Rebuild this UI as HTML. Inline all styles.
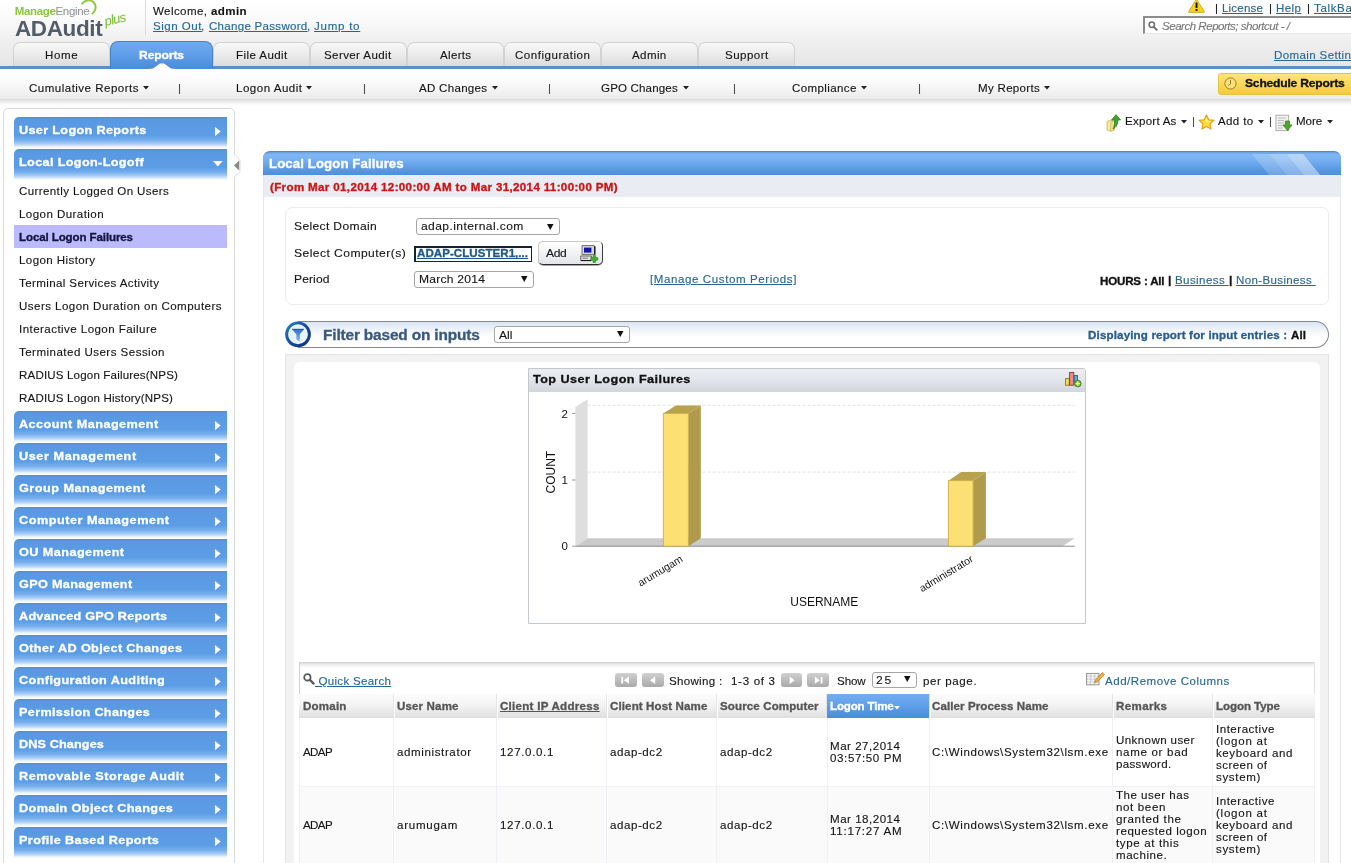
<!DOCTYPE html>
<html><head><meta charset="utf-8"><title>ADAudit Plus - Local Logon Failures</title>
<style>
html,body{margin:0;padding:0;}
body{width:1351px;height:863px;overflow:hidden;position:relative;background:#fff;font-family:"Liberation Sans", sans-serif;}
#pg{will-change:transform;position:absolute;left:0;top:0;width:1351px;height:863px;overflow:hidden;}
#pg div,#pg span.t,#pg svg{position:absolute;box-sizing:border-box;}
span.t{white-space:pre;}
.u{text-decoration:underline;}
.lk{color:#26678f;text-decoration:underline;}
.sh{border-radius:5px 0 0 0;background:linear-gradient(#4d8edb 0%,#5898e2 7%,#5c9ee6 60%,#75adec 74%,#a9cdf5 87%,#e9f3fd 96%,#ffffff 100%);}
.tab{border:1px solid #d2d2d2;border-bottom:none;border-radius:7px 7px 0 0;background:linear-gradient(#f8f8f8,#ececec 45%,#dadada);}
.sel{border:1px solid #a6a6a6;border-radius:3px;background:#fff;}
.pb{border-radius:3px;background:linear-gradient(#d0d0d0,#a9a9a9);}
.th{background:linear-gradient(#fdfdfd,#f1f1f1 50%,#dedede);border-left:1px solid #fff;}
</style></head><body><div id="pg">
<div style="left:0px;top:0px;width:1351px;height:67px;background:linear-gradient(#ffffff 0%,#fbfbfb 25%,#f0f0f0 60%,#e5e5e5 100%);"></div>
<span class="t" style="left:14.80px;top:5.77px;font-size:11.5px;line-height:11.5px;color:#141414;letter-spacing:-0.351px;"><b style="color:#8cc63f">Manage</b><span style="color:#8b929a">Engine</span></span>
<svg style="left:78px;top:0px" width="22" height="18" viewBox="0 0 22 18"><path d="M3.5 4.2 C8 -1.5 15.5 -0.5 17.3 5 C18.2 8.5 16.5 12 13.8 14" fill="none" stroke="#8cc63f" stroke-width="1.9"/><path d="M7 2.6 C10.5 -0.6 14.8 0.8 15.8 4.6" fill="none" stroke="#a9d46c" stroke-width="0.8"/></svg>
<span class="t" style="left:15.00px;top:17.55px;font-size:22.5px;line-height:22.5px;color:#525d67;font-weight:700;letter-spacing:-0.382px;">ADAudit</span>
<span class="t" style="left:105.90px;top:15.10px;font-size:13px;line-height:13px;color:#7fbf3f;font-style:italic;-webkit-text-stroke:0.12px;transform:rotate(-13deg);transform-origin:0 100%;letter-spacing:-0.7px;">plus</span>
<div style="left:145px;top:0px;width:1px;height:35px;background:#dcdcdc;"></div>
<span class="t" style="left:153.10px;top:5.59px;font-size:11px;line-height:11px;color:#141414;letter-spacing:0.382px;transform:scaleX(1.05);transform-origin:0 0;-webkit-text-stroke:0.12px;">Welcome, <b>admin</b></span>
<span class="t" style="left:152.50px;top:21.19px;font-size:11px;line-height:11px;color:#26678f;letter-spacing:0.476px;transform:scaleX(1.05);transform-origin:0 0;-webkit-text-stroke:0.12px;"><span class="lk">Sign Out</span></span>
<span class="t" style="left:200.70px;top:21.19px;font-size:11px;line-height:11px;color:#26678f;transform:scaleX(1.05);transform-origin:0 0;-webkit-text-stroke:0.12px;">,</span>
<span class="t" style="left:208.60px;top:21.19px;font-size:11px;line-height:11px;color:#26678f;letter-spacing:0.264px;transform:scaleX(1.05);transform-origin:0 0;-webkit-text-stroke:0.12px;"><span class="lk">Change Password</span></span>
<span class="t" style="left:306.60px;top:21.19px;font-size:11px;line-height:11px;color:#26678f;transform:scaleX(1.05);transform-origin:0 0;-webkit-text-stroke:0.12px;">,</span>
<span class="t" style="left:314.40px;top:21.19px;font-size:11px;line-height:11px;color:#26678f;letter-spacing:0.704px;transform:scaleX(1.05);transform-origin:0 0;-webkit-text-stroke:0.12px;"><span class="lk">Jump to</span></span>
<svg style="left:1188px;top:-1px" width="17" height="14" viewBox="0 0 17 14"><path d="M8.5 0.2 L16.4 12.6 Q16.6 13.4 15.8 13.4 L1.2 13.4 Q0.4 13.4 0.6 12.6 Z" fill="#f6d21c" stroke="#b89a10" stroke-width="0.7"/><rect x="7.6" y="3.6" width="1.9" height="5.4" fill="#111"/><rect x="7.6" y="10" width="1.9" height="1.9" fill="#111"/></svg>
<span class="t" style="left:1214.60px;top:3.49px;font-size:11px;line-height:11px;color:#141414;transform:scaleX(1.05);transform-origin:0 0;-webkit-text-stroke:0.12px;">|</span>
<span class="t" style="left:1221.80px;top:3.49px;font-size:11px;line-height:11px;color:#26678f;letter-spacing:0.173px;transform:scaleX(1.05);transform-origin:0 0;-webkit-text-stroke:0.12px;"><span class="lk">License</span></span>
<span class="t" style="left:1268.60px;top:3.49px;font-size:11px;line-height:11px;color:#141414;transform:scaleX(1.05);transform-origin:0 0;-webkit-text-stroke:0.12px;">|</span>
<span class="t" style="left:1275.80px;top:3.49px;font-size:11px;line-height:11px;color:#26678f;letter-spacing:0.366px;transform:scaleX(1.05);transform-origin:0 0;-webkit-text-stroke:0.12px;"><span class="lk">Help</span></span>
<span class="t" style="left:1306.70px;top:3.49px;font-size:11px;line-height:11px;color:#141414;transform:scaleX(1.05);transform-origin:0 0;-webkit-text-stroke:0.12px;">|</span>
<span class="t" style="left:1313.80px;top:3.49px;font-size:11px;line-height:11px;color:#26678f;letter-spacing:0.605px;transform:scaleX(1.05);transform-origin:0 0;-webkit-text-stroke:0.12px;"><span class="lk">TalkBack</span></span>
<div style="left:1143px;top:16px;width:215px;height:18px;background:#fff;border-top:2px solid #8c8c8c;border-left:2px solid #8c8c8c;border-bottom:1px solid #e6e6e6;"></div>
<svg style="left:1148px;top:21px" width="10" height="10" viewBox="0 0 10 10"><circle cx="3.8" cy="3.8" r="2.7" fill="none" stroke="#6e6e6e" stroke-width="1.5"/><path d="M5.8 5.8 L8.8 8.8" stroke="#6e6e6e" stroke-width="1.9" stroke-linecap="round"/></svg>
<span class="t" style="left:1162.10px;top:20.69px;font-size:11px;line-height:11px;color:#777;font-style:italic;letter-spacing:-0.468px;transform:scaleX(1.05);transform-origin:0 0;-webkit-text-stroke:0.12px;">Search Reports; shortcut - /</span>
<span class="t" style="left:1273.70px;top:50.49px;font-size:11px;line-height:11px;color:#26678f;letter-spacing:0.351px;transform:scaleX(1.05);transform-origin:0 0;-webkit-text-stroke:0.12px;"><span class="lk">Domain Settings</span></span>
<div class="tab" style="left:13px;top:42px;width:97px;height:25px;"></div>
<span class="t" style="left:44.80px;top:50.39px;font-size:11px;line-height:11px;color:#141414;letter-spacing:0.568px;transform:scaleX(1.05);transform-origin:0 0;-webkit-text-stroke:0.12px;">Home</span>
<div class="tab" style="left:213px;top:42px;width:97px;height:25px;"></div>
<span class="t" style="left:235.80px;top:50.39px;font-size:11px;line-height:11px;color:#141414;letter-spacing:0.400px;transform:scaleX(1.05);transform-origin:0 0;-webkit-text-stroke:0.12px;">File Audit</span>
<div class="tab" style="left:310px;top:42px;width:97px;height:25px;"></div>
<span class="t" style="left:324.40px;top:50.39px;font-size:11px;line-height:11px;color:#141414;letter-spacing:0.371px;transform:scaleX(1.05);transform-origin:0 0;-webkit-text-stroke:0.12px;">Server Audit</span>
<div class="tab" style="left:407px;top:42px;width:97px;height:25px;"></div>
<span class="t" style="left:439.70px;top:50.39px;font-size:11px;line-height:11px;color:#141414;letter-spacing:0.306px;transform:scaleX(1.05);transform-origin:0 0;-webkit-text-stroke:0.12px;">Alerts</span>
<div class="tab" style="left:504px;top:42px;width:97px;height:25px;"></div>
<span class="t" style="left:514.90px;top:50.39px;font-size:11px;line-height:11px;color:#141414;letter-spacing:0.495px;transform:scaleX(1.05);transform-origin:0 0;-webkit-text-stroke:0.12px;">Configuration</span>
<div class="tab" style="left:601px;top:42px;width:97px;height:25px;"></div>
<span class="t" style="left:631.80px;top:50.39px;font-size:11px;line-height:11px;color:#141414;letter-spacing:0.371px;transform:scaleX(1.05);transform-origin:0 0;-webkit-text-stroke:0.12px;">Admin</span>
<div class="tab" style="left:698px;top:42px;width:97px;height:25px;"></div>
<span class="t" style="left:724.70px;top:50.39px;font-size:11px;line-height:11px;color:#141414;letter-spacing:0.446px;transform:scaleX(1.05);transform-origin:0 0;-webkit-text-stroke:0.12px;">Support</span>
<div style="left:0px;top:66px;width:1351px;height:3px;background:#5b8fc6;"></div>
<div style="left:110px;top:41px;width:103px;height:28px;border:1px solid #4a82c6;border-bottom:none;border-radius:8px 8px 0 0;background:linear-gradient(#70aaee 0%,#62a0ea 40%,#4a8ad8 100%);"></div>
<span class="t" style="left:139.10px;top:50.39px;font-size:11px;line-height:11px;color:#fff;font-weight:700;letter-spacing:-0.101px;transform:scaleX(1.1);transform-origin:0 0;-webkit-text-stroke:0.3px;">Reports</span>
<svg style="left:148px;top:63px" width="28" height="6" viewBox="0 0 28 6"><path d="M0 6 L5 5.4 L12 0.4 L16 0.4 L23 5.4 L28 6 Z" fill="#fff"/></svg>
<div style="left:0px;top:69px;width:1351px;height:30px;background:linear-gradient(#ffffff 0%,#fcfcfc 40%,#ebebeb 100%);"></div>
<div style="left:0px;top:99px;width:1351px;height:6px;background:linear-gradient(#d9d9d9 0%,#e6e6e6 30%,#f3f3f3 65%,#ffffff 100%);"></div>
<span class="t" style="left:29.00px;top:82.59px;font-size:11px;line-height:11px;color:#141414;letter-spacing:0.450px;transform:scaleX(1.05);transform-origin:0 0;-webkit-text-stroke:0.12px;">Cumulative Reports</span>
<svg style="left:143.4px;top:86.0px" width="8" height="5" viewBox="0 0 8 5"><path d="M0 0 H6 L3.0 3.5 Z" fill="#222"/></svg>
<span class="t" style="left:236.00px;top:82.59px;font-size:11px;line-height:11px;color:#141414;letter-spacing:0.478px;transform:scaleX(1.05);transform-origin:0 0;-webkit-text-stroke:0.12px;">Logon Audit</span>
<svg style="left:305.8px;top:86.0px" width="8" height="5" viewBox="0 0 8 5"><path d="M0 0 H6 L3.0 3.5 Z" fill="#222"/></svg>
<span class="t" style="left:419.40px;top:82.59px;font-size:11px;line-height:11px;color:#141414;letter-spacing:0.271px;transform:scaleX(1.05);transform-origin:0 0;-webkit-text-stroke:0.12px;">AD Changes</span>
<svg style="left:492.0px;top:86.0px" width="8" height="5" viewBox="0 0 8 5"><path d="M0 0 H6 L3.0 3.5 Z" fill="#222"/></svg>
<span class="t" style="left:600.70px;top:82.59px;font-size:11px;line-height:11px;color:#141414;letter-spacing:0.152px;transform:scaleX(1.05);transform-origin:0 0;-webkit-text-stroke:0.12px;">GPO Changes</span>
<svg style="left:683.0px;top:86.0px" width="8" height="5" viewBox="0 0 8 5"><path d="M0 0 H6 L3.0 3.5 Z" fill="#222"/></svg>
<span class="t" style="left:792.10px;top:82.59px;font-size:11px;line-height:11px;color:#141414;letter-spacing:0.351px;transform:scaleX(1.05);transform-origin:0 0;-webkit-text-stroke:0.12px;">Compliance</span>
<svg style="left:861.0px;top:86.0px" width="8" height="5" viewBox="0 0 8 5"><path d="M0 0 H6 L3.0 3.5 Z" fill="#222"/></svg>
<span class="t" style="left:978.10px;top:82.59px;font-size:11px;line-height:11px;color:#141414;letter-spacing:0.284px;transform:scaleX(1.05);transform-origin:0 0;-webkit-text-stroke:0.12px;">My Reports</span>
<svg style="left:1044.0px;top:86.0px" width="8" height="5" viewBox="0 0 8 5"><path d="M0 0 H6 L3.0 3.5 Z" fill="#222"/></svg>
<span class="t" style="left:177.80px;top:82.59px;font-size:11px;line-height:11px;color:#444;transform:scaleX(1.05);transform-origin:0 0;-webkit-text-stroke:0.12px;">|</span>
<span class="t" style="left:362.80px;top:82.59px;font-size:11px;line-height:11px;color:#444;transform:scaleX(1.05);transform-origin:0 0;-webkit-text-stroke:0.12px;">|</span>
<span class="t" style="left:547.80px;top:82.59px;font-size:11px;line-height:11px;color:#444;transform:scaleX(1.05);transform-origin:0 0;-webkit-text-stroke:0.12px;">|</span>
<span class="t" style="left:732.80px;top:82.59px;font-size:11px;line-height:11px;color:#444;transform:scaleX(1.05);transform-origin:0 0;-webkit-text-stroke:0.12px;">|</span>
<span class="t" style="left:917.80px;top:82.59px;font-size:11px;line-height:11px;color:#444;transform:scaleX(1.05);transform-origin:0 0;-webkit-text-stroke:0.12px;">|</span>
<div style="left:1217.5px;top:72.5px;width:150px;height:22.5px;border:1px solid #e9c046;border-radius:3px;background:linear-gradient(#fde680 0%,#fbd858 50%,#f7c93a 100%);"></div>
<svg style="left:1224px;top:77px" width="13" height="13" viewBox="0 0 13 13"><circle cx="6.5" cy="6.5" r="5.6" fill="#fbe07a" stroke="#8a7420" stroke-width="0.9"/><path d="M6.5 3 L6.5 6.8 L4.4 8.6" fill="none" stroke="#8a7420" stroke-width="0.9"/></svg>
<span class="t" style="left:1245.40px;top:78.39px;font-size:11px;line-height:11px;color:#111;font-weight:700;letter-spacing:-0.187px;transform:scaleX(1.1);transform-origin:0 0;-webkit-text-stroke:0.3px;">Schedule Reports</span>
<div style="left:3px;top:108px;width:232px;height:770px;border:1px solid #d9d9d9;border-radius:5px;background:#fff;"></div>
<svg style="left:233px;top:153px" width="8" height="24" viewBox="0 0 8 24"><path d="M1.5 1 L7 6.8 L7 18.4 L1.5 24" fill="#fff" stroke="#dcdcdc" stroke-width="1"/><path d="M1 1.5 V23.5" stroke="#fff" stroke-width="1.6"/><path d="M6.2 7.6 L6.2 17.6 L1 12.6 Z" fill="#8a8a8a"/></svg>
<div class="sh" style="left:14px;top:117px;width:213px;height:31px;"></div>
<span class="t" style="left:18.90px;top:125.27px;font-size:11.5px;line-height:11.5px;color:#fff;font-weight:700;letter-spacing:0.301px;transform:scaleX(1.1);transform-origin:0 0;-webkit-text-stroke:0.3px;">User Logon Reports</span>
<svg style="left:214.8px;top:127.2px" width="7" height="11" viewBox="0 0 7 11"><path d="M0 0 L5.6 4.6 L0 9.2 Z" fill="#fff"/></svg>
<div class="sh" style="left:14px;top:149px;width:213px;height:31px;"></div>
<span class="t" style="left:18.90px;top:157.27px;font-size:11.5px;line-height:11.5px;color:#fff;font-weight:700;letter-spacing:0.320px;transform:scaleX(1.1);transform-origin:0 0;-webkit-text-stroke:0.3px;">Local Logon-Logoff</span>
<svg style="left:212.6px;top:160.9px" width="11" height="7" viewBox="0 0 11 7"><path d="M0 0 H9.6 L4.8 5.6 Z" fill="#fff"/></svg>
<span class="t" style="left:18.90px;top:185.89px;font-size:11px;line-height:11px;color:#141414;letter-spacing:0.365px;transform:scaleX(1.05);transform-origin:0 0;-webkit-text-stroke:0.12px;">Currently Logged On Users</span>
<span class="t" style="left:18.90px;top:208.89px;font-size:11px;line-height:11px;color:#141414;letter-spacing:0.409px;transform:scaleX(1.05);transform-origin:0 0;-webkit-text-stroke:0.12px;">Logon Duration</span>
<div style="left:14px;top:225px;width:213px;height:23px;background:#babafc;"></div>
<span class="t" style="left:18.90px;top:232.31px;font-size:10.5px;line-height:10.5px;color:#14143c;font-weight:700;letter-spacing:-0.101px;transform:scaleX(1.1);transform-origin:0 0;-webkit-text-stroke:0.3px;">Local Logon Failures</span>
<span class="t" style="left:18.90px;top:254.89px;font-size:11px;line-height:11px;color:#141414;letter-spacing:0.383px;transform:scaleX(1.05);transform-origin:0 0;-webkit-text-stroke:0.12px;">Logon History</span>
<span class="t" style="left:18.90px;top:277.89px;font-size:11px;line-height:11px;color:#141414;letter-spacing:0.366px;transform:scaleX(1.05);transform-origin:0 0;-webkit-text-stroke:0.12px;">Terminal Services Activity</span>
<span class="t" style="left:18.90px;top:300.89px;font-size:11px;line-height:11px;color:#141414;letter-spacing:0.430px;transform:scaleX(1.05);transform-origin:0 0;-webkit-text-stroke:0.12px;">Users Logon Duration on Computers</span>
<span class="t" style="left:18.90px;top:323.89px;font-size:11px;line-height:11px;color:#141414;letter-spacing:0.419px;transform:scaleX(1.05);transform-origin:0 0;-webkit-text-stroke:0.12px;">Interactive Logon Failure</span>
<span class="t" style="left:18.90px;top:346.89px;font-size:11px;line-height:11px;color:#141414;letter-spacing:0.441px;transform:scaleX(1.05);transform-origin:0 0;-webkit-text-stroke:0.12px;">Terminated Users Session</span>
<span class="t" style="left:18.90px;top:369.89px;font-size:11px;line-height:11px;color:#141414;letter-spacing:0.160px;transform:scaleX(1.05);transform-origin:0 0;-webkit-text-stroke:0.12px;">RADIUS Logon Failures(NPS)</span>
<span class="t" style="left:18.90px;top:392.89px;font-size:11px;line-height:11px;color:#141414;letter-spacing:0.173px;transform:scaleX(1.05);transform-origin:0 0;-webkit-text-stroke:0.12px;">RADIUS Logon History(NPS)</span>
<div class="sh" style="left:14px;top:411px;width:213px;height:31px;"></div>
<span class="t" style="left:18.90px;top:419.27px;font-size:11.5px;line-height:11.5px;color:#fff;font-weight:700;letter-spacing:0.413px;transform:scaleX(1.1);transform-origin:0 0;-webkit-text-stroke:0.3px;">Account Management</span>
<svg style="left:214.8px;top:421.2px" width="7" height="11" viewBox="0 0 7 11"><path d="M0 0 L5.6 4.6 L0 9.2 Z" fill="#fff"/></svg>
<div class="sh" style="left:14px;top:443px;width:213px;height:31px;"></div>
<span class="t" style="left:18.90px;top:451.27px;font-size:11.5px;line-height:11.5px;color:#fff;font-weight:700;letter-spacing:0.529px;transform:scaleX(1.1);transform-origin:0 0;-webkit-text-stroke:0.3px;">User Management</span>
<svg style="left:214.8px;top:453.2px" width="7" height="11" viewBox="0 0 7 11"><path d="M0 0 L5.6 4.6 L0 9.2 Z" fill="#fff"/></svg>
<div class="sh" style="left:14px;top:475px;width:213px;height:31px;"></div>
<span class="t" style="left:18.90px;top:483.27px;font-size:11.5px;line-height:11.5px;color:#fff;font-weight:700;letter-spacing:0.447px;transform:scaleX(1.1);transform-origin:0 0;-webkit-text-stroke:0.3px;">Group Management</span>
<svg style="left:214.8px;top:485.2px" width="7" height="11" viewBox="0 0 7 11"><path d="M0 0 L5.6 4.6 L0 9.2 Z" fill="#fff"/></svg>
<div class="sh" style="left:14px;top:507px;width:213px;height:31px;"></div>
<span class="t" style="left:18.90px;top:515.27px;font-size:11.5px;line-height:11.5px;color:#fff;font-weight:700;letter-spacing:0.473px;transform:scaleX(1.1);transform-origin:0 0;-webkit-text-stroke:0.3px;">Computer Management</span>
<svg style="left:214.8px;top:517.2px" width="7" height="11" viewBox="0 0 7 11"><path d="M0 0 L5.6 4.6 L0 9.2 Z" fill="#fff"/></svg>
<div class="sh" style="left:14px;top:539px;width:213px;height:31px;"></div>
<span class="t" style="left:18.90px;top:547.27px;font-size:11.5px;line-height:11.5px;color:#fff;font-weight:700;letter-spacing:0.398px;transform:scaleX(1.1);transform-origin:0 0;-webkit-text-stroke:0.3px;">OU Management</span>
<svg style="left:214.8px;top:549.2px" width="7" height="11" viewBox="0 0 7 11"><path d="M0 0 L5.6 4.6 L0 9.2 Z" fill="#fff"/></svg>
<div class="sh" style="left:14px;top:571px;width:213px;height:31px;"></div>
<span class="t" style="left:18.90px;top:579.27px;font-size:11.5px;line-height:11.5px;color:#fff;font-weight:700;letter-spacing:0.292px;transform:scaleX(1.1);transform-origin:0 0;-webkit-text-stroke:0.3px;">GPO Management</span>
<svg style="left:214.8px;top:581.2px" width="7" height="11" viewBox="0 0 7 11"><path d="M0 0 L5.6 4.6 L0 9.2 Z" fill="#fff"/></svg>
<div class="sh" style="left:14px;top:603px;width:213px;height:31px;"></div>
<span class="t" style="left:18.90px;top:611.27px;font-size:11.5px;line-height:11.5px;color:#fff;font-weight:700;letter-spacing:0.223px;transform:scaleX(1.1);transform-origin:0 0;-webkit-text-stroke:0.3px;">Advanced GPO Reports</span>
<svg style="left:214.8px;top:613.2px" width="7" height="11" viewBox="0 0 7 11"><path d="M0 0 L5.6 4.6 L0 9.2 Z" fill="#fff"/></svg>
<div class="sh" style="left:14px;top:635px;width:213px;height:31px;"></div>
<span class="t" style="left:18.90px;top:643.27px;font-size:11.5px;line-height:11.5px;color:#fff;font-weight:700;letter-spacing:0.336px;transform:scaleX(1.1);transform-origin:0 0;-webkit-text-stroke:0.3px;">Other AD Object Changes</span>
<svg style="left:214.8px;top:645.2px" width="7" height="11" viewBox="0 0 7 11"><path d="M0 0 L5.6 4.6 L0 9.2 Z" fill="#fff"/></svg>
<div class="sh" style="left:14px;top:667px;width:213px;height:31px;"></div>
<span class="t" style="left:18.90px;top:675.27px;font-size:11.5px;line-height:11.5px;color:#fff;font-weight:700;letter-spacing:0.370px;transform:scaleX(1.1);transform-origin:0 0;-webkit-text-stroke:0.3px;">Configuration Auditing</span>
<svg style="left:214.8px;top:677.2px" width="7" height="11" viewBox="0 0 7 11"><path d="M0 0 L5.6 4.6 L0 9.2 Z" fill="#fff"/></svg>
<div class="sh" style="left:14px;top:699px;width:213px;height:31px;"></div>
<span class="t" style="left:18.90px;top:707.27px;font-size:11.5px;line-height:11.5px;color:#fff;font-weight:700;letter-spacing:0.304px;transform:scaleX(1.1);transform-origin:0 0;-webkit-text-stroke:0.3px;">Permission Changes</span>
<svg style="left:214.8px;top:709.2px" width="7" height="11" viewBox="0 0 7 11"><path d="M0 0 L5.6 4.6 L0 9.2 Z" fill="#fff"/></svg>
<div class="sh" style="left:14px;top:731px;width:213px;height:31px;"></div>
<span class="t" style="left:18.90px;top:739.27px;font-size:11.5px;line-height:11.5px;color:#fff;font-weight:700;letter-spacing:0.108px;transform:scaleX(1.1);transform-origin:0 0;-webkit-text-stroke:0.3px;">DNS Changes</span>
<svg style="left:214.8px;top:741.2px" width="7" height="11" viewBox="0 0 7 11"><path d="M0 0 L5.6 4.6 L0 9.2 Z" fill="#fff"/></svg>
<div class="sh" style="left:14px;top:763px;width:213px;height:31px;"></div>
<span class="t" style="left:18.90px;top:771.27px;font-size:11.5px;line-height:11.5px;color:#fff;font-weight:700;letter-spacing:0.477px;transform:scaleX(1.1);transform-origin:0 0;-webkit-text-stroke:0.3px;">Removable Storage Audit</span>
<svg style="left:214.8px;top:773.2px" width="7" height="11" viewBox="0 0 7 11"><path d="M0 0 L5.6 4.6 L0 9.2 Z" fill="#fff"/></svg>
<div class="sh" style="left:14px;top:795px;width:213px;height:31px;"></div>
<span class="t" style="left:18.90px;top:803.27px;font-size:11.5px;line-height:11.5px;color:#fff;font-weight:700;letter-spacing:0.350px;transform:scaleX(1.1);transform-origin:0 0;-webkit-text-stroke:0.3px;">Domain Object Changes</span>
<svg style="left:214.8px;top:805.2px" width="7" height="11" viewBox="0 0 7 11"><path d="M0 0 L5.6 4.6 L0 9.2 Z" fill="#fff"/></svg>
<div class="sh" style="left:14px;top:827px;width:213px;height:31px;"></div>
<span class="t" style="left:18.90px;top:835.27px;font-size:11.5px;line-height:11.5px;color:#fff;font-weight:700;letter-spacing:0.352px;transform:scaleX(1.1);transform-origin:0 0;-webkit-text-stroke:0.3px;">Profile Based Reports</span>
<svg style="left:214.8px;top:837.2px" width="7" height="11" viewBox="0 0 7 11"><path d="M0 0 L5.6 4.6 L0 9.2 Z" fill="#fff"/></svg>
<svg style="left:1106px;top:114px" width="16" height="18" viewBox="0 0 16 18">
<path d="M1 7.5 L5 6 L8.5 7.2 L8.5 16 L4.5 17.2 L1 16 Z" fill="#f4eba8" stroke="#c9b45a" stroke-width="0.8"/>
<path d="M4.6 7.8 L8.5 7.2 L8.5 16 L4.6 17.2 Z" fill="#efe08a" stroke="#c9b45a" stroke-width="0.6"/>
<path d="M10 0.6 L14.6 6 L12 6 C12 10 10.5 13 7 15 C8.6 12 8.8 9 8.6 6 L5.6 6 Z" fill="#3fa32c" stroke="#2a7a1c" stroke-width="0.7"/></svg>
<span class="t" style="left:1125.20px;top:116.49px;font-size:11px;line-height:11px;color:#141414;letter-spacing:0.232px;transform:scaleX(1.05);transform-origin:0 0;-webkit-text-stroke:0.12px;">Export As</span>
<svg style="left:1180.8px;top:120.4px" width="8" height="5" viewBox="0 0 8 5"><path d="M0 0 H6 L3.0 3.5 Z" fill="#222"/></svg>
<span class="t" style="left:1191.60px;top:116.49px;font-size:11px;line-height:11px;color:#444;transform:scaleX(1.05);transform-origin:0 0;-webkit-text-stroke:0.12px;">|</span>
<svg style="left:1198px;top:114px" width="17" height="16" viewBox="0 0 17 16"><path d="M8.5 1 L10.7 5.8 L15.9 6.4 L12 9.9 L13.1 15 L8.5 12.4 L3.9 15 L5 9.9 L1.1 6.4 L6.3 5.8 Z" fill="#fbe03c" stroke="#e49a1c" stroke-width="1.1" stroke-linejoin="round"/><path d="M8.5 3.6 L9.8 6.8 L13 7.2 L8.5 8 Z" fill="#fff6a8"/></svg>
<span class="t" style="left:1218.10px;top:116.49px;font-size:11px;line-height:11px;color:#141414;letter-spacing:0.328px;transform:scaleX(1.05);transform-origin:0 0;-webkit-text-stroke:0.12px;">Add to</span>
<svg style="left:1257.7px;top:120.4px" width="8" height="5" viewBox="0 0 8 5"><path d="M0 0 H6 L3.0 3.5 Z" fill="#222"/></svg>
<span class="t" style="left:1268.80px;top:116.49px;font-size:11px;line-height:11px;color:#444;transform:scaleX(1.05);transform-origin:0 0;-webkit-text-stroke:0.12px;">|</span>
<svg style="left:1275px;top:114px" width="18" height="18" viewBox="0 0 18 18"><rect x="1" y="1.2" width="12.6" height="15.4" fill="#f2f2f2" stroke="#a8a8a8" stroke-width="0.9"/>
<path d="M3 4 H11 M3 6.5 H9 M3 9 H9 M3 11.5 H8 M3 14 H8" stroke="#b4b4b4" stroke-width="0.9"/>
<path d="M10.4 7 L14.6 7 L14.6 11 L17 11 L12.5 16.6 L8 11 L10.4 11 Z" fill="#4aa82e" stroke="#2f7d1c" stroke-width="0.7"/></svg>
<span class="t" style="left:1296.20px;top:116.49px;font-size:11px;line-height:11px;color:#141414;letter-spacing:-0.059px;transform:scaleX(1.05);transform-origin:0 0;-webkit-text-stroke:0.12px;">More</span>
<svg style="left:1327.0px;top:120.4px" width="8" height="5" viewBox="0 0 8 5"><path d="M0 0 H6 L3.0 3.5 Z" fill="#222"/></svg>
<div style="left:263px;top:174px;width:1078px;height:700px;border-left:1px solid #e3e8f0;border-right:1px solid #e3e8f0;background:#fff;"></div>
<div style="left:263px;top:151px;width:1078px;height:24px;border-radius:7px 7px 0 0;border-top:1px solid #4f86cc;background:linear-gradient(#6a9fe0 0%,#80b8f4 12%,#74aef0 38%,#5c9be4 72%,#4d8edb 100%);overflow:hidden;"><svg style="right:0;top:0" width="100" height="24" viewBox="0 0 100 24"><path d="M11 2 L28.5 2 L46.5 24 L29 24 Z" fill="rgba(255,255,255,.20)"/><path d="M28.5 2 L45.5 2 L63.5 24 L46.5 24 Z" fill="rgba(255,255,255,.30)"/><path d="M45.5 2 L62 2 L80 24 L63.5 24 Z" fill="rgba(255,255,255,.44)"/></svg></div>
<span class="t" style="left:268.60px;top:157.94px;font-size:12px;line-height:12px;color:#fff;font-weight:700;letter-spacing:0.091px;transform:scaleX(1.1);transform-origin:0 0;-webkit-text-stroke:0.3px;">Local Logon Failures</span>
<div style="left:264px;top:175px;width:1076px;height:22px;background:#e9ecf3;"></div>
<span class="t" style="left:270.20px;top:182.31px;font-size:10.5px;line-height:10.5px;color:#cc1414;font-weight:700;letter-spacing:0.325px;transform:scaleX(1.1);transform-origin:0 0;-webkit-text-stroke:0.3px;">(From Mar 01,2014 12:00:00 AM to Mar 31,2014 11:00:00 PM)</span>
<div style="left:285px;top:207px;width:1044px;height:98px;border:1px solid #ebebeb;border-radius:7px;background:#fff;"></div>
<span class="t" style="left:293.80px;top:221.47px;font-size:11.5px;line-height:11.5px;color:#141414;letter-spacing:0.332px;transform:scaleX(1.05);transform-origin:0 0;-webkit-text-stroke:0.12px;">Select Domain</span>
<div class="sel" style="left:416px;top:218px;width:144px;height:17px;"></div>
<span class="t" style="left:420.80px;top:221.47px;font-size:11.5px;line-height:11.5px;color:#141414;letter-spacing:0.376px;transform:scaleX(1.05);transform-origin:0 0;-webkit-text-stroke:0.12px;">adap.internal.com</span>
<svg style="left:546.6px;top:223.5px" width="8" height="8" viewBox="0 0 8 8"><path d="M0 0 H6.5 L3.25 6 Z" fill="#111"/></svg>
<span class="t" style="left:293.80px;top:247.57px;font-size:11.5px;line-height:11.5px;color:#141414;letter-spacing:0.429px;transform:scaleX(1.05);transform-origin:0 0;-webkit-text-stroke:0.12px;">Select Computer(s)</span>
<div style="left:414px;top:246px;width:118px;height:16px;border:2px solid #16222e;border-right-width:1px;border-bottom-width:1px;background:#fff;"></div>
<span class="t" style="left:417.20px;top:248.21px;font-size:10.5px;line-height:10.5px;color:#1d5a8a;font-weight:700;letter-spacing:0.040px;transform:scaleX(1.1);transform-origin:0 0;-webkit-text-stroke:0.3px;"><span class="u">ADAP-CLUSTER1,...</span></span>
<div style="left:538px;top:241px;width:65px;height:24px;border:1px solid #c6c6c6;border-right-color:#3c3c3c;border-bottom-color:#2c2c2c;border-radius:5px;box-shadow:0 0.5px 0 #555;background:linear-gradient(#ffffff,#f1f2f4 50%,#e3e5e9);"></div>
<span class="t" style="left:545.80px;top:247.77px;font-size:11.5px;line-height:11.5px;color:#141414;letter-spacing:-0.340px;transform:scaleX(1.05);transform-origin:0 0;-webkit-text-stroke:0.12px;">Add</span>
<svg style="left:580px;top:245px" width="19" height="18" viewBox="0 0 19 18">
<path d="M2 0.6 L14 0.6 L15.2 1.8 L15.2 9.6 L2 9.6 Z" fill="#d8d8d8" stroke="#555" stroke-width="0.8"/>
<path d="M14 0.6 L15.2 1.8 L15.2 9.6 L14 9.6 Z" fill="#222"/>
<rect x="4" y="2.6" width="7.4" height="5" fill="#1414a8"/>
<rect x="0.8" y="11" width="10.5" height="4.4" fill="#e4e4e4" stroke="#444" stroke-width="0.8"/>
<path d="M1 15.6 H11" stroke="#111" stroke-width="1"/><path d="M2.4 13.2 H8" stroke="#777" stroke-width="1"/>
<path d="M13 10.4 H15.6 V12.6 H17.8 V15.2 H15.6 V17.4 H13 V15.2 H10.8 V12.6 H13 Z" fill="#3fb02c" stroke="#2a8a1c" stroke-width="0.6"/></svg>
<span class="t" style="left:293.80px;top:274.17px;font-size:11.5px;line-height:11.5px;color:#141414;letter-spacing:0.102px;transform:scaleX(1.05);transform-origin:0 0;-webkit-text-stroke:0.12px;">Period</span>
<div class="sel" style="left:414px;top:271px;width:120px;height:17px;"></div>
<span class="t" style="left:418.70px;top:274.17px;font-size:11.5px;line-height:11.5px;color:#141414;letter-spacing:0.223px;transform:scaleX(1.05);transform-origin:0 0;-webkit-text-stroke:0.12px;">March 2014</span>
<svg style="left:520.6px;top:276.3px" width="8" height="8" viewBox="0 0 8 8"><path d="M0 0 H6.5 L3.25 6 Z" fill="#111"/></svg>
<span class="t" style="left:650.40px;top:274.39px;font-size:11px;line-height:11px;color:#26678f;letter-spacing:0.557px;transform:scaleX(1.05);transform-origin:0 0;-webkit-text-stroke:0.12px;"><span class="lk">[Manage Custom Periods]</span></span>
<span class="t" style="left:1100.20px;top:275.81px;font-size:10.5px;line-height:10.5px;color:#111;font-weight:700;letter-spacing:-0.157px;transform:scaleX(1.1);transform-origin:0 0;-webkit-text-stroke:0.3px;">HOURS : All</span>
<span class="t" style="left:1168.40px;top:275.39px;font-size:11px;line-height:11px;color:#111;font-weight:700;transform:scaleX(1.1);transform-origin:0 0;-webkit-text-stroke:0.3px;">|</span>
<span class="t" style="left:1175.40px;top:275.39px;font-size:11px;line-height:11px;color:#26678f;letter-spacing:0.382px;transform:scaleX(1.05);transform-origin:0 0;-webkit-text-stroke:0.12px;"><span class="lk">Business </span></span>
<span class="t" style="left:1229.40px;top:275.39px;font-size:11px;line-height:11px;color:#111;font-weight:700;transform:scaleX(1.1);transform-origin:0 0;-webkit-text-stroke:0.3px;">|</span>
<span class="t" style="left:1236.40px;top:275.39px;font-size:11px;line-height:11px;color:#26678f;letter-spacing:0.333px;transform:scaleX(1.05);transform-origin:0 0;-webkit-text-stroke:0.12px;"><span class="lk">Non-Business </span></span>
<div style="left:298px;top:321px;width:1031px;height:27px;border:1px solid #84898f;border-left:none;border-radius:0 14px 14px 0;background:linear-gradient(#d9e5f3 0%,#eef3fa 30%,#ffffff 62%,#ffffff 100%);"></div>
<svg style="left:284px;top:320px" width="28" height="28" viewBox="0 0 28 28"><defs><linearGradient id="rg" x1="0" y1="0" x2="1" y2="1"><stop offset="0" stop-color="#2384c6"/><stop offset="0.45" stop-color="#164f9f"/><stop offset="1" stop-color="#0e3080"/></linearGradient>
<linearGradient id="fg" x1="0" y1="0" x2="0" y2="1"><stop offset="0" stop-color="#2d6cc2"/><stop offset="1" stop-color="#8fbdf2"/></linearGradient></defs>
<circle cx="14" cy="14.3" r="11.4" fill="#e9f1fb" stroke="url(#rg)" stroke-width="2.9"/>
<path d="M8 9 L20 9 L15.8 14.6 L15.8 21.8 L12.4 19.4 L12.4 14.6 Z" fill="url(#fg)"/><path d="M8 9.3 H20" stroke="#1f58ac" stroke-width="0.9"/></svg>
<span class="t" style="left:323.40px;top:327.75px;font-size:14px;line-height:14px;color:#39597f;font-weight:700;letter-spacing:-0.140px;transform:scaleX(1.1);transform-origin:0 0;-webkit-text-stroke:0.3px;">Filter based on inputs</span>
<div class="sel" style="left:494px;top:326px;width:136px;height:17px;"></div>
<span class="t" style="left:499.20px;top:329.77px;font-size:11.5px;line-height:11.5px;color:#141414;transform:scaleX(1.05);transform-origin:0 0;-webkit-text-stroke:0.12px;">All</span>
<svg style="left:617.0px;top:330.6px" width="8" height="8" viewBox="0 0 8 8"><path d="M0 0 H6.5 L3.25 6 Z" fill="#111"/></svg>
<span class="t" style="left:1088.20px;top:329.91px;font-size:10.5px;line-height:10.5px;color:#275d8d;font-weight:700;letter-spacing:0.148px;transform:scaleX(1.1);transform-origin:0 0;-webkit-text-stroke:0.3px;">Displaying report for input entries :</span>
<span class="t" style="left:1290.90px;top:329.91px;font-size:10.5px;line-height:10.5px;color:#111;font-weight:700;letter-spacing:0.122px;transform:scaleX(1.1);transform-origin:0 0;-webkit-text-stroke:0.3px;">All</span>
<div style="left:285px;top:354px;width:1044px;height:520px;border:1px solid #e4e4e4;border-bottom:none;background:#f2f2f2;"></div>
<div style="left:294px;top:362px;width:1026px;height:510px;border-radius:6px 6px 0 0;background:#fff;"></div>
<div style="left:528px;top:368px;width:558px;height:256px;border:1px solid #c4c7cb;border-radius:0 3px 0 0;background:#fff;"></div>
<div style="left:529px;top:369px;width:556px;height:22.5px;border-radius:0 2px 0 0;background:linear-gradient(#eceef2 0%,#e3e6eb 45%,#d2d6dc 100%);"></div>
<span class="t" style="left:533.20px;top:374.27px;font-size:11.5px;line-height:11.5px;color:#111;font-weight:700;letter-spacing:0.385px;transform:scaleX(1.1);transform-origin:0 0;-webkit-text-stroke:0.3px;">Top User Logon Failures</span>
<svg style="left:1064px;top:371px" width="18" height="17" viewBox="0 0 18 17">
<rect x="1.6" y="7.6" width="3.6" height="6.6" fill="#f1e25a" stroke="#7a7a1a" stroke-width="0.9"/>
<rect x="5.6" y="1.4" width="4.2" height="12.8" fill="#f08a7a" stroke="#8a3a2a" stroke-width="0.9"/>
<rect x="10.2" y="4.6" width="3.4" height="7" fill="#6aa6e0" stroke="#2a5a90" stroke-width="0.9"/>
<circle cx="13.8" cy="12.6" r="3.3" fill="#7ac23a" stroke="#3f7a1a" stroke-width="0.9"/>
<path d="M13.8 10.6 V14.6 M11.8 12.6 H15.8" stroke="#f4ffd8" stroke-width="1.1"/></svg>
<svg style="left:529px;top:392px" width="556" height="231" viewBox="529 392 556 231" font-family='"Liberation Sans", sans-serif'>
<path d="M575.4 546.2 L587.6 538.3 L587.6 399.2 L575.4 407.1 Z" fill="#dedede"/>
<path d="M575.4 546.2 L587.6 538.3 L1074.7 538.3 L1062.5 546.2 Z" fill="#cbcbcb"/>
<path d="M587.6 405.4 H1074.7 M587.6 472.1 H1074.7" stroke="#e2e2e2" stroke-width="1" stroke-dasharray="3,2"/>
<path d="M575.4 546.2 H1074.7" stroke="#8c8c8c" stroke-width="1"/>
<path d="M572 413.4 H575.4 M572 480 H575.4 M572 546.2 H575.4" stroke="#999" stroke-width="1"/>
<!-- bar 1 -->
<path d="M688.3 413.4 L700.8 405.4 L700.8 538.3 L688.3 546.2 Z" fill="#b09a4c"/>
<path d="M663.3 413.4 L675.8 405.4 L700.8 405.4 L688.3 413.4 Z" fill="#b8a24e"/>
<rect x="663.3" y="413.4" width="25" height="132.8" fill="#fde073" stroke="#c9aa40" stroke-width="0.8"/>
<!-- bar 2 -->
<path d="M973.1 480.7 L985.9 472.1 L985.9 538.3 L973.1 546.2 Z" fill="#b09a4c"/>
<path d="M948.4 480.7 L961.2 472.1 L985.9 472.1 L973.1 480.7 Z" fill="#b8a24e"/>
<rect x="948.4" y="480.7" width="24.7" height="65.5" fill="#fde073" stroke="#c9aa40" stroke-width="0.8"/>
<g fill="#111" font-size="11.5">
<text x="568" y="417.6" text-anchor="end">2</text><text x="568" y="484.2" text-anchor="end">1</text><text x="568" y="550.4" text-anchor="end">0</text>
<text transform="translate(555 472.2) rotate(-90)" text-anchor="middle" font-size="12">COUNT</text>
<text x="824.3" y="605.8" text-anchor="middle" font-size="12">USERNAME</text>
<text transform="translate(683.5 561) rotate(-31)" text-anchor="end" font-size="10.5">arumugam</text>
<text transform="translate(974 561) rotate(-31)" text-anchor="end" font-size="10.5">administrator</text>
</g></svg>
<div style="left:299px;top:662px;width:1016px;height:32px;border-left:1px solid #d0d0d0;border-right:1px solid #e2e2e2;background:linear-gradient(#d4d4d4 0%,#efefef 9%,#ffffff 18%,#ffffff 100%);"></div>
<svg style="left:303px;top:673px" width="12" height="12" viewBox="0 0 12 12"><circle cx="4.4" cy="4.4" r="3.2" fill="none" stroke="#5a5a5a" stroke-width="1.7"/><path d="M6.9 6.9 L10.6 10.6" stroke="#5a5a5a" stroke-width="2.2" stroke-linecap="round"/></svg>
<span class="t" style="left:314.90px;top:676.19px;font-size:11px;line-height:11px;color:#26678f;letter-spacing:0.271px;transform:scaleX(1.05);transform-origin:0 0;-webkit-text-stroke:0.12px;"><span class="lk"> Quick Search</span></span>
<div class="pb" style="left:615.1px;top:673px;width:21.6px;height:14px;"><svg style="left:0;top:0" width="22" height="14" viewBox="0 0 22 14"><path d="M7.2 4 V10.5" stroke="#fff" stroke-width="1.8"/><path d="M14 3.6 L8.8 7.2 L14 10.8 Z" fill="#fff"/></svg></div>
<div class="pb" style="left:642.4px;top:673px;width:21.6px;height:14px;"><svg style="left:0;top:0" width="22" height="14" viewBox="0 0 22 14"><path d="M13.2 3.4 L8 7.2 L13.2 11 Z" fill="#fff"/></svg></div>
<div class="pb" style="left:780.6px;top:673px;width:21.6px;height:14px;"><svg style="left:0;top:0" width="22" height="14" viewBox="0 0 22 14"><path d="M8.6 3.4 L13.8 7.2 L8.6 11 Z" fill="#fff"/></svg></div>
<div class="pb" style="left:807.3px;top:673px;width:21.6px;height:14px;"><svg style="left:0;top:0" width="22" height="14" viewBox="0 0 22 14"><path d="M14.6 4 V10.5" stroke="#fff" stroke-width="1.8"/><path d="M7.8 3.6 L13 7.2 L7.8 10.8 Z" fill="#fff"/></svg></div>
<span class="t" style="left:669.00px;top:675.59px;font-size:11px;line-height:11px;color:#141414;letter-spacing:0.288px;transform:scaleX(1.05);transform-origin:0 0;-webkit-text-stroke:0.12px;">Showing :</span>
<span class="t" style="left:731.20px;top:675.59px;font-size:11px;line-height:11px;color:#141414;letter-spacing:0.663px;transform:scaleX(1.05);transform-origin:0 0;-webkit-text-stroke:0.12px;">1-3 of 3</span>
<span class="t" style="left:837.20px;top:675.59px;font-size:11px;line-height:11px;color:#141414;letter-spacing:-0.057px;transform:scaleX(1.05);transform-origin:0 0;-webkit-text-stroke:0.12px;">Show</span>
<div class="sel" style="left:871.5px;top:671.5px;width:45px;height:16.5px;"></div>
<span class="t" style="left:876.20px;top:675.17px;font-size:11.5px;line-height:11.5px;color:#141414;letter-spacing:1.691px;transform:scaleX(1.05);transform-origin:0 0;-webkit-text-stroke:0.12px;">25</span>
<svg style="left:904.0px;top:676.3px" width="8" height="8" viewBox="0 0 8 8"><path d="M0 0 H6.5 L3.25 6 Z" fill="#111"/></svg>
<span class="t" style="left:923.00px;top:675.59px;font-size:11px;line-height:11px;color:#141414;letter-spacing:0.570px;transform:scaleX(1.05);transform-origin:0 0;-webkit-text-stroke:0.12px;">per page.</span>
<svg style="left:1086px;top:672px" width="19" height="14" viewBox="0 0 19 14"><rect x="0.6" y="1.4" width="12.4" height="11.4" fill="#f4f4f4" stroke="#8a8a8a" stroke-width="0.9"/>
<path d="M0.6 4.2 H13 M4.6 1.4 V12.8 M8.8 1.4 V12.8 M0.6 7.2 H13 M0.6 10 H13" stroke="#a6a6a6" stroke-width="0.7" stroke-dasharray="1.2,0.8"/>
<path d="M16.4 0.6 L18.4 2.6 L11.2 9.8 L8.6 10.6 L9.4 8 Z" fill="#f2b230" stroke="#b8741a" stroke-width="0.7"/></svg>
<span class="t" style="left:1105.00px;top:676.19px;font-size:11px;line-height:11px;color:#26678f;letter-spacing:0.492px;transform:scaleX(1.05);transform-origin:0 0;-webkit-text-stroke:0.12px;">Add/Remove Columns</span>
<div style="left:299px;top:694px;width:1016px;height:24.3px;background:linear-gradient(#fdfdfd,#f2f2f2 50%,#dfdfdf);"></div>
<div style="left:392.6px;top:694px;width:2px;height:24.3px;background:linear-gradient(90deg,#e4e4e4 50%,#fff 50%);"></div>
<div style="left:495.6px;top:694px;width:2px;height:24.3px;background:linear-gradient(90deg,#e4e4e4 50%,#fff 50%);"></div>
<div style="left:605.6px;top:694px;width:2px;height:24.3px;background:linear-gradient(90deg,#e4e4e4 50%,#fff 50%);"></div>
<div style="left:715.9px;top:694px;width:2px;height:24.3px;background:linear-gradient(90deg,#e4e4e4 50%,#fff 50%);"></div>
<div style="left:826.0px;top:694px;width:2px;height:24.3px;background:linear-gradient(90deg,#e4e4e4 50%,#fff 50%);"></div>
<div style="left:928.7px;top:694px;width:2px;height:24.3px;background:linear-gradient(90deg,#e4e4e4 50%,#fff 50%);"></div>
<div style="left:1111.9px;top:694px;width:2px;height:24.3px;background:linear-gradient(90deg,#e4e4e4 50%,#fff 50%);"></div>
<div style="left:1211.9px;top:694px;width:2px;height:24.3px;background:linear-gradient(90deg,#e4e4e4 50%,#fff 50%);"></div>
<div style="left:826.5px;top:694px;width:102.7px;height:24.3px;background:linear-gradient(#74aef0 0%,#62a0ea 45%,#4a8ad8 100%);"></div>
<span class="t" style="left:303.10px;top:701.21px;font-size:10.5px;line-height:10.5px;color:#555;font-weight:700;letter-spacing:0.187px;transform:scaleX(1.1);transform-origin:0 0;-webkit-text-stroke:0.3px;">Domain</span>
<span class="t" style="left:396.90px;top:701.21px;font-size:10.5px;line-height:10.5px;color:#555;font-weight:700;letter-spacing:0.132px;transform:scaleX(1.1);transform-origin:0 0;-webkit-text-stroke:0.3px;">User Name</span>
<span class="t" style="left:499.60px;top:701.21px;font-size:10.5px;line-height:10.5px;color:#555;font-weight:700;letter-spacing:0.248px;transform:scaleX(1.1);transform-origin:0 0;-webkit-text-stroke:0.3px;"><span class="u">Client IP Address</span></span>
<span class="t" style="left:609.50px;top:701.21px;font-size:10.5px;line-height:10.5px;color:#555;font-weight:700;letter-spacing:0.104px;transform:scaleX(1.1);transform-origin:0 0;-webkit-text-stroke:0.3px;">Client Host Name</span>
<span class="t" style="left:719.90px;top:701.21px;font-size:10.5px;line-height:10.5px;color:#555;font-weight:700;letter-spacing:0.105px;transform:scaleX(1.1);transform-origin:0 0;-webkit-text-stroke:0.3px;">Source Computer</span>
<span class="t" style="left:932.40px;top:701.21px;font-size:10.5px;line-height:10.5px;color:#555;font-weight:700;letter-spacing:0.082px;transform:scaleX(1.1);transform-origin:0 0;-webkit-text-stroke:0.3px;">Caller Process Name</span>
<span class="t" style="left:1115.60px;top:701.21px;font-size:10.5px;line-height:10.5px;color:#555;font-weight:700;letter-spacing:0.334px;transform:scaleX(1.1);transform-origin:0 0;-webkit-text-stroke:0.3px;">Remarks</span>
<span class="t" style="left:1216.00px;top:701.21px;font-size:10.5px;line-height:10.5px;color:#555;font-weight:700;letter-spacing:-0.066px;transform:scaleX(1.1);transform-origin:0 0;-webkit-text-stroke:0.3px;">Logon Type</span>
<span class="t" style="left:829.70px;top:701.41px;font-size:10.5px;line-height:10.5px;color:#fff;font-weight:700;letter-spacing:-0.148px;transform:scaleX(1.1);transform-origin:0 0;-webkit-text-stroke:0.3px;">Logon Time</span>
<svg style="left:893.6px;top:705.5px" width="8" height="5" viewBox="0 0 8 5"><path d="M0 0 H6 L3.0 3.5 Z" fill="#fff"/></svg>
<div style="left:299px;top:718.3px;width:1016px;height:67.3px;background:#fff;"></div>
<div style="left:299px;top:785.6px;width:1016px;height:80px;background:#fafafa;border-top:1px solid #f0f2f6;"></div>
<div style="left:393.1px;top:718.3px;width:1px;height:150px;background:#eef1f6;"></div>
<div style="left:496.1px;top:718.3px;width:1px;height:150px;background:#eef1f6;"></div>
<div style="left:606.1px;top:718.3px;width:1px;height:150px;background:#eef1f6;"></div>
<div style="left:716.4px;top:718.3px;width:1px;height:150px;background:#eef1f6;"></div>
<div style="left:826.5px;top:718.3px;width:1px;height:150px;background:#eef1f6;"></div>
<div style="left:929.2px;top:718.3px;width:1px;height:150px;background:#eef1f6;"></div>
<div style="left:1112.4px;top:718.3px;width:1px;height:150px;background:#eef1f6;"></div>
<div style="left:1212.4px;top:718.3px;width:1px;height:150px;background:#eef1f6;"></div>
<div style="left:299px;top:718.3px;width:1px;height:150px;background:#eef1f6;"></div>
<div style="left:1314px;top:718.3px;width:1px;height:150px;background:#eef1f6;"></div>
<span class="t" style="left:302.80px;top:747.29px;font-size:11px;line-height:11px;color:#141414;letter-spacing:-0.590px;transform:scaleX(1.05);transform-origin:0 0;-webkit-text-stroke:0.12px;">ADAP</span>
<span class="t" style="left:396.90px;top:747.29px;font-size:11px;line-height:11px;color:#141414;letter-spacing:0.582px;transform:scaleX(1.05);transform-origin:0 0;-webkit-text-stroke:0.12px;">administrator</span>
<span class="t" style="left:499.60px;top:747.29px;font-size:11px;line-height:11px;color:#141414;letter-spacing:0.620px;transform:scaleX(1.05);transform-origin:0 0;-webkit-text-stroke:0.12px;">127.0.0.1</span>
<span class="t" style="left:609.50px;top:747.29px;font-size:11px;line-height:11px;color:#141414;letter-spacing:0.537px;transform:scaleX(1.05);transform-origin:0 0;-webkit-text-stroke:0.12px;">adap-dc2</span>
<span class="t" style="left:719.90px;top:747.29px;font-size:11px;line-height:11px;color:#141414;letter-spacing:0.537px;transform:scaleX(1.05);transform-origin:0 0;-webkit-text-stroke:0.12px;">adap-dc2</span>
<span class="t" style="left:932.40px;top:747.29px;font-size:11px;line-height:11px;color:#141414;letter-spacing:0.619px;transform:scaleX(1.05);transform-origin:0 0;-webkit-text-stroke:0.12px;">C:\Windows\System32\lsm.exe</span>
<span class="t" style="left:302.80px;top:820.09px;font-size:11px;line-height:11px;color:#141414;letter-spacing:-0.590px;transform:scaleX(1.05);transform-origin:0 0;-webkit-text-stroke:0.12px;">ADAP</span>
<span class="t" style="left:396.90px;top:820.09px;font-size:11px;line-height:11px;color:#141414;letter-spacing:0.698px;transform:scaleX(1.05);transform-origin:0 0;-webkit-text-stroke:0.12px;">arumugam</span>
<span class="t" style="left:499.60px;top:820.09px;font-size:11px;line-height:11px;color:#141414;letter-spacing:0.620px;transform:scaleX(1.05);transform-origin:0 0;-webkit-text-stroke:0.12px;">127.0.0.1</span>
<span class="t" style="left:609.50px;top:820.09px;font-size:11px;line-height:11px;color:#141414;letter-spacing:0.537px;transform:scaleX(1.05);transform-origin:0 0;-webkit-text-stroke:0.12px;">adap-dc2</span>
<span class="t" style="left:719.90px;top:820.09px;font-size:11px;line-height:11px;color:#141414;letter-spacing:0.537px;transform:scaleX(1.05);transform-origin:0 0;-webkit-text-stroke:0.12px;">adap-dc2</span>
<span class="t" style="left:932.40px;top:820.09px;font-size:11px;line-height:11px;color:#141414;letter-spacing:0.619px;transform:scaleX(1.05);transform-origin:0 0;-webkit-text-stroke:0.12px;">C:\Windows\System32\lsm.exe</span>
<span class="t" style="left:829.70px;top:741.39px;font-size:11px;line-height:11px;color:#141414;letter-spacing:0.485px;transform:scaleX(1.05);transform-origin:0 0;-webkit-text-stroke:0.12px;">Mar 27,2014</span>
<span class="t" style="left:829.70px;top:753.49px;font-size:11px;line-height:11px;color:#141414;letter-spacing:0.590px;transform:scaleX(1.05);transform-origin:0 0;-webkit-text-stroke:0.12px;">03:57:50 PM</span>
<span class="t" style="left:829.70px;top:814.19px;font-size:11px;line-height:11px;color:#141414;letter-spacing:0.485px;transform:scaleX(1.05);transform-origin:0 0;-webkit-text-stroke:0.12px;">Mar 18,2014</span>
<span class="t" style="left:829.70px;top:826.19px;font-size:11px;line-height:11px;color:#141414;letter-spacing:0.726px;transform:scaleX(1.05);transform-origin:0 0;-webkit-text-stroke:0.12px;">11:17:27 AM</span>
<span class="t" style="left:1115.60px;top:735.49px;font-size:11px;line-height:11px;color:#141414;letter-spacing:0.386px;transform:scaleX(1.05);transform-origin:0 0;-webkit-text-stroke:0.12px;">Unknown user</span>
<span class="t" style="left:1115.60px;top:747.49px;font-size:11px;line-height:11px;color:#141414;letter-spacing:0.648px;transform:scaleX(1.05);transform-origin:0 0;-webkit-text-stroke:0.12px;">name or bad</span>
<span class="t" style="left:1115.60px;top:759.49px;font-size:11px;line-height:11px;color:#141414;letter-spacing:0.308px;transform:scaleX(1.05);transform-origin:0 0;-webkit-text-stroke:0.12px;">password.</span>
<span class="t" style="left:1216.00px;top:723.59px;font-size:11px;line-height:11px;color:#141414;letter-spacing:0.482px;transform:scaleX(1.05);transform-origin:0 0;-webkit-text-stroke:0.12px;">Interactive</span>
<span class="t" style="left:1216.00px;top:796.39px;font-size:11px;line-height:11px;color:#141414;letter-spacing:0.482px;transform:scaleX(1.05);transform-origin:0 0;-webkit-text-stroke:0.12px;">Interactive</span>
<span class="t" style="left:1216.00px;top:735.59px;font-size:11px;line-height:11px;color:#141414;letter-spacing:0.711px;transform:scaleX(1.05);transform-origin:0 0;-webkit-text-stroke:0.12px;">(logon at</span>
<span class="t" style="left:1216.00px;top:808.39px;font-size:11px;line-height:11px;color:#141414;letter-spacing:0.711px;transform:scaleX(1.05);transform-origin:0 0;-webkit-text-stroke:0.12px;">(logon at</span>
<span class="t" style="left:1216.00px;top:747.59px;font-size:11px;line-height:11px;color:#141414;letter-spacing:0.554px;transform:scaleX(1.05);transform-origin:0 0;-webkit-text-stroke:0.12px;">keyboard and</span>
<span class="t" style="left:1216.00px;top:820.39px;font-size:11px;line-height:11px;color:#141414;letter-spacing:0.554px;transform:scaleX(1.05);transform-origin:0 0;-webkit-text-stroke:0.12px;">keyboard and</span>
<span class="t" style="left:1216.00px;top:759.59px;font-size:11px;line-height:11px;color:#141414;letter-spacing:0.424px;transform:scaleX(1.05);transform-origin:0 0;-webkit-text-stroke:0.12px;">screen of</span>
<span class="t" style="left:1216.00px;top:832.39px;font-size:11px;line-height:11px;color:#141414;letter-spacing:0.424px;transform:scaleX(1.05);transform-origin:0 0;-webkit-text-stroke:0.12px;">screen of</span>
<span class="t" style="left:1216.00px;top:771.59px;font-size:11px;line-height:11px;color:#141414;letter-spacing:0.626px;transform:scaleX(1.05);transform-origin:0 0;-webkit-text-stroke:0.12px;">system)</span>
<span class="t" style="left:1216.00px;top:844.39px;font-size:11px;line-height:11px;color:#141414;letter-spacing:0.626px;transform:scaleX(1.05);transform-origin:0 0;-webkit-text-stroke:0.12px;">system)</span>
<span class="t" style="left:1115.60px;top:790.19px;font-size:11px;line-height:11px;color:#141414;letter-spacing:0.479px;transform:scaleX(1.05);transform-origin:0 0;-webkit-text-stroke:0.12px;">The user has</span>
<span class="t" style="left:1115.60px;top:802.19px;font-size:11px;line-height:11px;color:#141414;letter-spacing:0.601px;transform:scaleX(1.05);transform-origin:0 0;-webkit-text-stroke:0.12px;">not been</span>
<span class="t" style="left:1115.60px;top:814.19px;font-size:11px;line-height:11px;color:#141414;letter-spacing:0.613px;transform:scaleX(1.05);transform-origin:0 0;-webkit-text-stroke:0.12px;">granted the</span>
<span class="t" style="left:1115.60px;top:826.19px;font-size:11px;line-height:11px;color:#141414;letter-spacing:0.529px;transform:scaleX(1.05);transform-origin:0 0;-webkit-text-stroke:0.12px;">requested logon</span>
<span class="t" style="left:1115.60px;top:838.19px;font-size:11px;line-height:11px;color:#141414;letter-spacing:0.599px;transform:scaleX(1.05);transform-origin:0 0;-webkit-text-stroke:0.12px;">type at this</span>
<span class="t" style="left:1115.60px;top:850.19px;font-size:11px;line-height:11px;color:#141414;letter-spacing:0.511px;transform:scaleX(1.05);transform-origin:0 0;-webkit-text-stroke:0.12px;">machine.</span>
</div></body></html>
